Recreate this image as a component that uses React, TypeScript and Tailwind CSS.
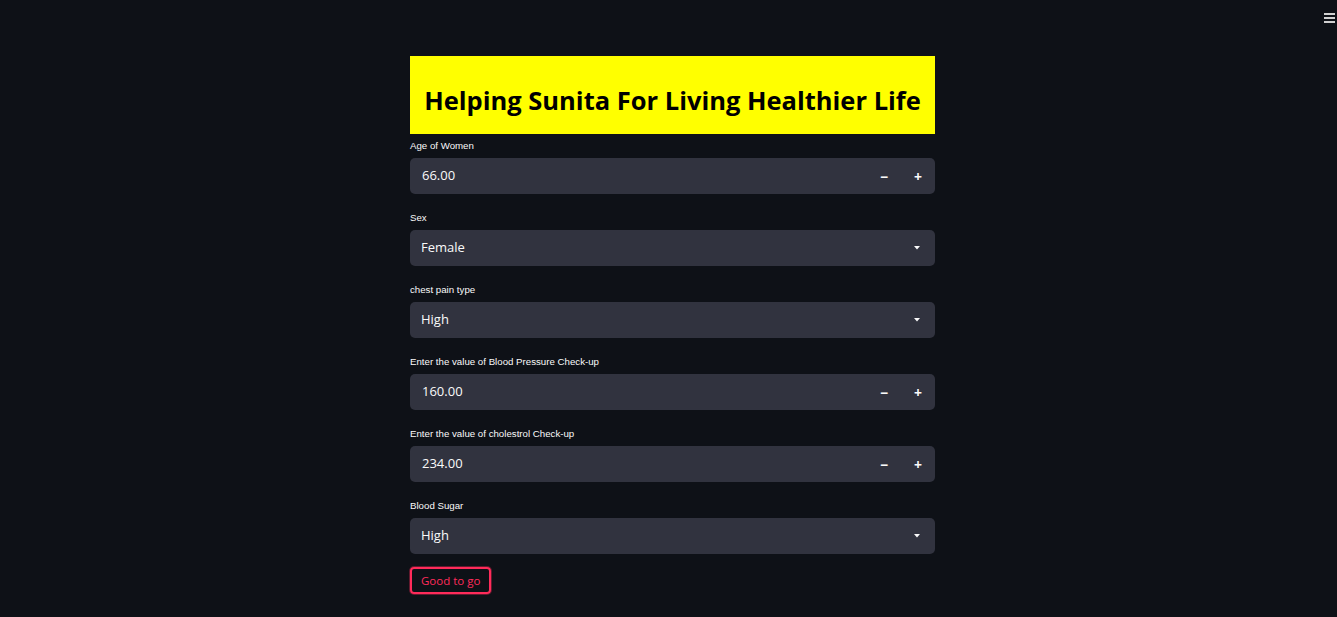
const font = { fontFamily: "'Open Sans', 'Noto Sans', sans-serif" } as const;
const labelFont = { fontFamily: "'Liberation Sans', Arial, sans-serif" } as const;

function Label({ children }: { children: string }) {
  return (
    <div className="text-[9.7px] leading-[14px] text-[#fafafa] h-[14px] mb-[5px]" style={labelFont}>
      {children}
    </div>
  );
}

function NumberField({ label, value }: { label: string; value: string }) {
  return (
    <div>
      <Label>{label}</Label>
      <div className="flex h-[36px] rounded-[5px] bg-[#31333f] overflow-hidden">
        <div className="flex-1 flex items-center pl-[12px] text-[13px] text-[#fafafa]">{value}</div>
        <div className="flex items-center">
          <button className="w-[34px] h-full flex items-center justify-center text-[#fafafa] text-[14px] font-bold">−</button>
          <button className="w-[34px] h-full flex items-center justify-center text-[#fafafa] text-[14px] font-bold">+</button>
        </div>
      </div>
    </div>
  );
}

function SelectField({ label, value }: { label: string; value: string }) {
  return (
    <div>
      <Label>{label}</Label>
      <div className="flex items-center h-[36px] rounded-[5px] bg-[#31333f] pl-[11px] pr-[15px]">
        <div className="flex-1 text-[13px] text-[#fafafa]">{value}</div>
        <svg width="6" height="4" viewBox="0 0 6 4">
          <path d="M0 0h6L3 3.5z" fill="#fafafa" />
        </svg>
      </div>
    </div>
  );
}

export default function App() {
  return (
    <div className="min-h-[617px] bg-[#0e1117] relative" style={font}>
      <button className="absolute right-[2px] top-[13px] flex flex-col gap-[2px]">
        <span className="block w-[11px] h-[2px] bg-[#d0d0d0]" />
        <span className="block w-[11px] h-[2px] bg-[#d0d0d0]" />
        <span className="block w-[11px] h-[2px] bg-[#d0d0d0]" />
      </button>
      <div className="flex justify-center pl-[8px] pt-[56px]">
        <div className="w-[525px] flex flex-col">
          <div className="h-[78px] bg-[#ffff00] flex items-center justify-center pt-[10px]">
            <h1 className="text-[25.5px] font-bold text-black">Helping Sunita For Living Healthier Life</h1>
          </div>
          <div className="flex flex-col gap-[17px] pt-[5px]">
            <NumberField label="Age of Women" value="66.00" />
            <SelectField label="Sex" value="Female" />
            <SelectField label="chest pain type" value="High" />
            <NumberField label="Enter the value of Blood Pressure Check-up" value="160.00" />
            <NumberField label="Enter the value of cholestrol Check-up" value="234.00" />
            <SelectField label="Blood Sugar" value="High" />
          </div>
          <div className="pt-[13px]">
            <button className="h-[27px] px-[9px] rounded-[4px] border-2 border-[#ff2b5a] shadow-[0_0_0_1px_rgba(255,43,90,0.35)] text-[11.5px] text-[#ff2b5a]">
              Good to go
            </button>
          </div>
        </div>
      </div>
    </div>
  );
}
